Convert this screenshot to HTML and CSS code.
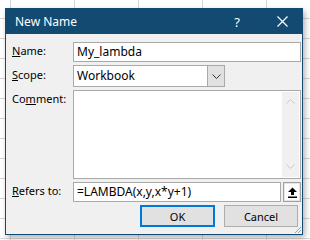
FILE: index.html
```
<!DOCTYPE html>
<html lang="en">
<head>
    <meta charset="UTF-8">
    <title>New Name</title>
    <link rel="stylesheet" href="styles.css">
</head>
<body>

    <div class="dialog">

        <div class="titlebar">
            <span class="title">New Name</span>
            <span class="help">?</span>
            <svg class="close" width="11" height="11" viewBox="0 0 11 11">
                <path d="M0.5 0.5 L10.5 10.5 M10.5 0.5 L0.5 10.5" stroke="#fff" stroke-width="1.2" fill="none"/>
            </svg>
        </div>

        <div class="form">
            <label class="label"><u>N</u>ame:</label>
            <div class="field">My_lambda</div>

            <label class="label"><u>S</u>cope:</label>
            <div class="select">
                <span class="select-text">Workbook</span>
                <span class="drop">
                    <svg width="9" height="5" viewBox="0 0 9 5">
                        <path d="M0.5 0.5 L4.5 4.5 L8.5 0.5" stroke="#333" stroke-width="1" fill="none"/>
                    </svg>
                </span>
            </div>

            <label class="label label-top">Co<u>m</u>ment:</label>
            <div class="comment">
                <div class="scrollbar">
                    <svg width="9" height="5" viewBox="0 0 9 5">
                        <path d="M0.5 4.5 L4.5 0.5 L8.5 4.5" stroke="#c8c8c8" stroke-width="1" fill="none"/>
                    </svg>
                    <svg width="9" height="5" viewBox="0 0 9 5">
                        <path d="M0.5 0.5 L4.5 4.5 L8.5 0.5" stroke="#c8c8c8" stroke-width="1" fill="none"/>
                    </svg>
                </div>
            </div>

            <label class="label"><u>R</u>efers to:</label>
            <div class="refers">
                <div class="field field-grow">=LAMBDA(x,y,x*y+1)</div>
                <div class="collapse">
                    <svg width="11" height="11" viewBox="0 0 11 11">
                        <path d="M5.5 0.5 L10 5 L7 5 L7 8 L4 8 L4 5 L1 5 Z" fill="#000"/>
                        <rect x="1" y="9.5" width="9" height="1.5" fill="#000"/>
                    </svg>
                </div>
            </div>
        </div>

        <div class="buttons">
            <button class="btn btn-default">OK</button>
            <button class="btn">Cancel</button>
        </div>

        <svg class="grip" width="7" height="7" viewBox="0 0 7 7">
            <path d="M7 1 L1 7 M7 4 L4 7" stroke="#a0a0a0" stroke-width="1" fill="none"/>
        </svg>

    </div>

</body>
</html>
```

FILE: styles.css
```
* {
    margin: 0;
    padding: 0;
    box-sizing: border-box;
}

body {
    width: 310px;
    height: 240px;
    overflow: hidden;
    background-color: #ffffff;
    background-image:
        linear-gradient(to right, #d6d6d6 1px, transparent 1px),
        linear-gradient(to bottom, #d6d6d6 1px, transparent 1px);
    background-size: 64px 20px;
    background-position: 10px -2px;
    font-family: "Noto Sans", "Open Sans", sans-serif;
    font-size: 12px;
    color: #000;
}

.dialog {
    position: relative;
    width: 298px;
    height: 227px;
    margin: 8px 0 0 5px;
    background-color: #f0f0f0;
    border: 1px solid #124a72;
    box-shadow: 2px 3px 6px rgba(0, 0, 0, 0.3);
}

.titlebar {
    display: flex;
    align-items: center;
    height: 25px;
    background-color: #124a72;
    color: #fff;
    padding-left: 9px;
}

.title {
    flex: 1;
    font-size: 12px;
}

.help {
    font-size: 13px;
    margin-right: 37px;
}

.close {
    margin-right: 14px;
}

.form {
    display: grid;
    grid-template-columns: 61px 1fr;
    grid-template-rows: 20px 22px 89px 20px;
    row-gap: 3px;
    padding: 8px 1px 0 6px;
}

.label {
    align-self: center;
    margin-top: -3px;
    font-size: 11px;
}

.label-top {
    align-self: start;
    margin-top: 1px;
}

.field {
    background-color: #fff;
    border: 1px solid #a9a9a9;
    padding: 0 3px;
    line-height: 18px;
    white-space: nowrap;
}

.select {
    display: flex;
    width: 152px;
    background-color: #fff;
    border: 1px solid #a9a9a9;
}

.select-text {
    flex: 1;
    padding-left: 3px;
    line-height: 20px;
}

.drop {
    display: flex;
    align-items: center;
    justify-content: center;
    width: 17px;
    background-color: #e1e1e1;
    border-left: 1px solid #a9a9a9;
}

.comment {
    display: flex;
    justify-content: flex-end;
    background-color: #fff;
    border: 1px solid #a9a9a9;
    padding: 1px;
}

.scrollbar {
    display: flex;
    flex-direction: column;
    justify-content: space-between;
    align-items: center;
    width: 17px;
    background-color: #f0f0f0;
    padding: 7px 0 8px;
}

.refers {
    display: flex;
    gap: 2px;
}

.field-grow {
    flex: 1;
}

.collapse {
    display: flex;
    align-items: center;
    justify-content: center;
    width: 18px;
    background-color: #fdfdfd;
    border: 1px solid #a0a0a0;
    box-shadow: inset 0 0 0 1px #e6e6e6;
}

.buttons {
    display: flex;
    justify-content: flex-end;
    gap: 9px;
    padding: 3px 4px 0 0;
}

.btn {
    width: 74px;
    height: 22px;
    font-family: "Noto Sans", "Open Sans", sans-serif;
    font-size: 11px;
    color: #000;
    background-color: #e1e1e1;
    border: 1px solid #adadad;
}

.btn-default {
    width: 75px;
    border: 2px solid #0078d7;
}

.grip {
    position: absolute;
    right: 1px;
    bottom: 1px;
}
```
